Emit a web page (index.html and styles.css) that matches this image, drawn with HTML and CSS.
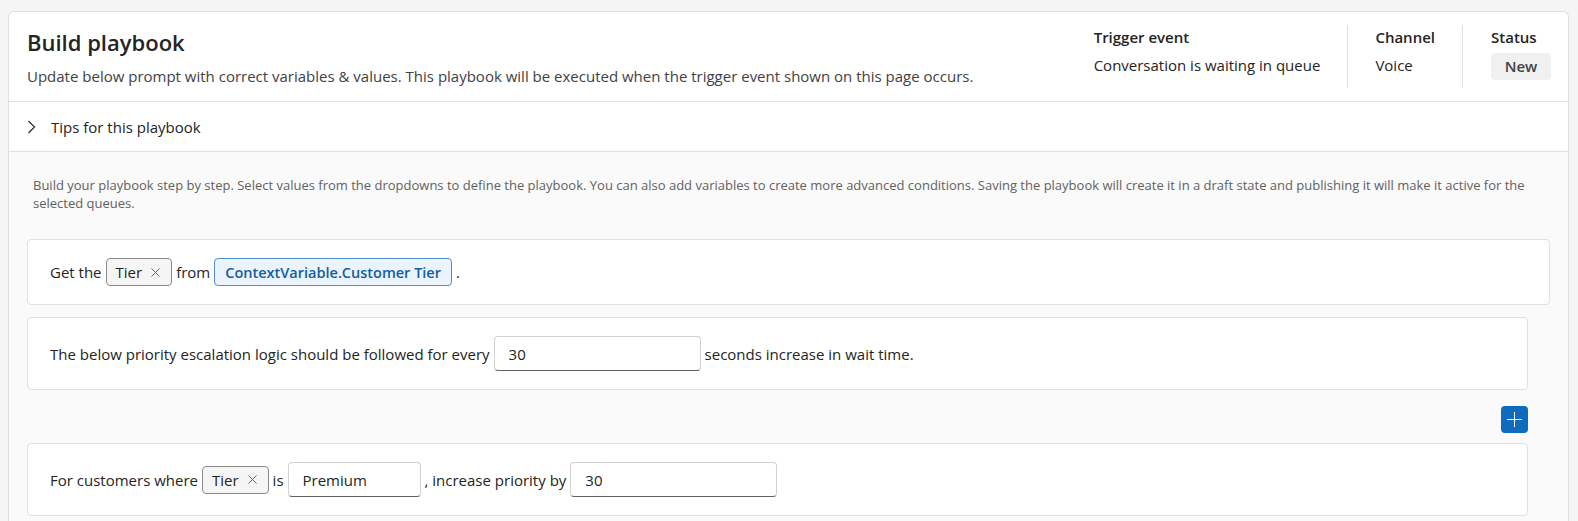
FILE: index.html
```html
<!DOCTYPE html>
<html lang="en">
<head>
  <meta charset="UTF-8">
  <meta name="viewport" content="width=device-width, initial-scale=1.0">
  <title>Build playbook</title>
  <link rel="stylesheet" href="styles.css">
</head>
<body>
  <div class="card">
    <div class="header">
      <div class="heading">
        <h1>Build playbook</h1>
        <p>Update below prompt with correct variables &amp; values. This playbook will be executed when the trigger event shown on this page occurs.</p>
      </div>
      <div class="meta">
        <div class="meta-item">
          <div class="meta-label">Trigger event</div>
          <div class="meta-value">Conversation is waiting in queue</div>
        </div>
        <div class="meta-item">
          <div class="meta-label">Channel</div>
          <div class="meta-value">Voice</div>
        </div>
        <div class="meta-item">
          <div class="meta-label">Status</div>
          <div class="badge">New</div>
        </div>
      </div>
    </div>

    <div class="tips">
      <svg class="chevron" width="9" height="14" viewBox="0 0 9 14"><path d="M1.5 1 L7.5 7 L1.5 13" fill="none" stroke="#242424" stroke-width="1.1"/></svg>
      <span>Tips for this playbook</span>
    </div>

    <div class="builder">
      <p class="hint">Build your playbook step by step. Select values from the dropdowns to define the playbook. You can also add variables to create more advanced conditions. Saving the playbook will create it in a draft state and publishing it will make it active for the selected queues.</p>

      <div class="step step-wide">
        <span>Get the</span>
        <span class="chip">Tier <svg class="chip-x" width="9" height="9" viewBox="0 0 9 9"><path d="M0.5 0.5 L8.5 8.5 M8.5 0.5 L0.5 8.5" stroke="#616161" stroke-width="1"/></svg></span>
        <span>from</span>
        <span class="chip chip-var">ContextVariable.Customer Tier</span>
        <span>.</span>
      </div>

      <div class="step step-tall">
        <span>The below priority escalation logic should be followed for every</span>
        <input class="field field-wide" type="text" value="30">
        <span>seconds increase in wait time.</span>
      </div>

      <div class="add-row">
        <button class="add-btn" aria-label="Add">
          <svg width="17" height="17" viewBox="0 0 17 17"><path d="M8.5 1 V16 M1 8.5 H16" stroke="#fff" stroke-width="1"/></svg>
        </button>
      </div>

      <div class="step step-tall">
        <span>For customers where</span>
        <span class="chip">Tier <svg class="chip-x" width="9" height="9" viewBox="0 0 9 9"><path d="M0.5 0.5 L8.5 8.5 M8.5 0.5 L0.5 8.5" stroke="#616161" stroke-width="1"/></svg></span>
        <span>is</span>
        <input class="field field-short" type="text" value="Premium">
        <span>, increase priority by</span>
        <input class="field field-wide" type="text" value="30">
      </div>
    </div>
  </div>
</body>
</html>
```

FILE: styles.css
```css
body {
  margin: 0;
  padding: 11px 9px 0 8px;
  background-color: #f5f5f5;
  font-family: 'Open Sans', 'Noto Sans', sans-serif;
  color: #242424;
  height: 100vh;
  box-sizing: border-box;
  overflow: hidden;
}

.card {
  background-color: #ffffff;
  border: 1px solid #e0e0e0;
  border-bottom: none;
  border-radius: 6px 6px 0 0;
  height: 100%;
  display: flex;
  flex-direction: column;
}

/* Шапка */
.header {
  display: flex;
  justify-content: space-between;
  align-items: center;
  height: 89px;
  padding: 0 17px 0 18px;
  border-bottom: 1px solid #e0e0e0;
}

.heading h1 {
  margin: 0 0 10px;
  font-size: 22px;
  font-weight: 600;
  line-height: 28px;
}

.heading p {
  margin: 0;
  font-size: 15px;
  line-height: 20px;
  color: #424242;
}

.meta {
  display: flex;
  height: 63px;
}

.meta-item {
  padding: 2px 27px 0;
  border-left: 1px solid #e0e0e0;
}

.meta-item:first-child {
  border-left: none;
}

.meta-item:last-child {
  padding-left: 28px;
  padding-right: 0;
}

.meta-label {
  font-size: 15px;
  font-weight: 600;
  line-height: 20px;
  margin-bottom: 8px;
}

.meta-value {
  font-size: 15px;
  line-height: 20px;
}

.badge {
  display: inline-block;
  width: 60px;
  height: 27px;
  line-height: 27px;
  margin-top: -4px;
  text-align: center;
  background-color: #f0f0f0;
  border-radius: 4px;
  font-size: 15px;
  font-weight: 600;
  color: #424242;
}

/* Подсказки */
.tips {
  display: flex;
  align-items: center;
  height: 49px;
  padding-left: 18px;
  border-bottom: 1px solid #e0e0e0;
  font-size: 15px;
}

.chevron {
  margin-right: 15px;
}

/* Конструктор */
.builder {
  flex: 1;
  background-color: #fafafa;
  padding: 24px 18px 0;
}

.hint {
  margin: 0 0 27px 6px;
  font-size: 13px;
  line-height: 18px;
  color: #616161;
}

.step {
  display: flex;
  align-items: center;
  gap: 4px;
  background-color: #ffffff;
  border: 1px solid #e0e0e0;
  border-radius: 4px;
  padding: 0 22px;
  font-size: 15px;
  box-sizing: border-box;
}

.step-wide {
  height: 66px;
  margin-bottom: 12px;
}

.step-tall {
  height: 73px;
  margin-right: 22px;
}

.chip {
  display: inline-flex;
  align-items: center;
  height: 28px;
  padding: 0 11px 0 9px;
  border: 1px solid #8a8a8a;
  border-radius: 4px;
  background-color: #f5f5f5;
  box-sizing: border-box;
}

.chip-x {
  margin-left: 9px;
}

.chip-var {
  padding: 0 10px;
  border-color: #4f8fd1;
  background-color: #ebf3fc;
  color: #115ea3;
  font-size: 14.5px;
  font-weight: 600;
}

.field {
  height: 35px;
  padding: 0 14px;
  border: 1px solid #d1d1d1;
  border-bottom-color: #616161;
  border-radius: 4px;
  font-family: inherit;
  font-size: 15px;
  color: #242424;
  background-color: #ffffff;
  box-sizing: border-box;
}

.field-wide {
  width: 207px;
}

.field-short {
  width: 133px;
}

.add-row {
  display: flex;
  justify-content: flex-end;
  margin: 16px 22px 10px 0;
}

.add-btn {
  width: 27px;
  height: 27px;
  padding: 0;
  border: none;
  border-radius: 4px;
  background-color: #0f6cbd;
  display: flex;
  align-items: center;
  justify-content: center;
  cursor: pointer;
}
```
